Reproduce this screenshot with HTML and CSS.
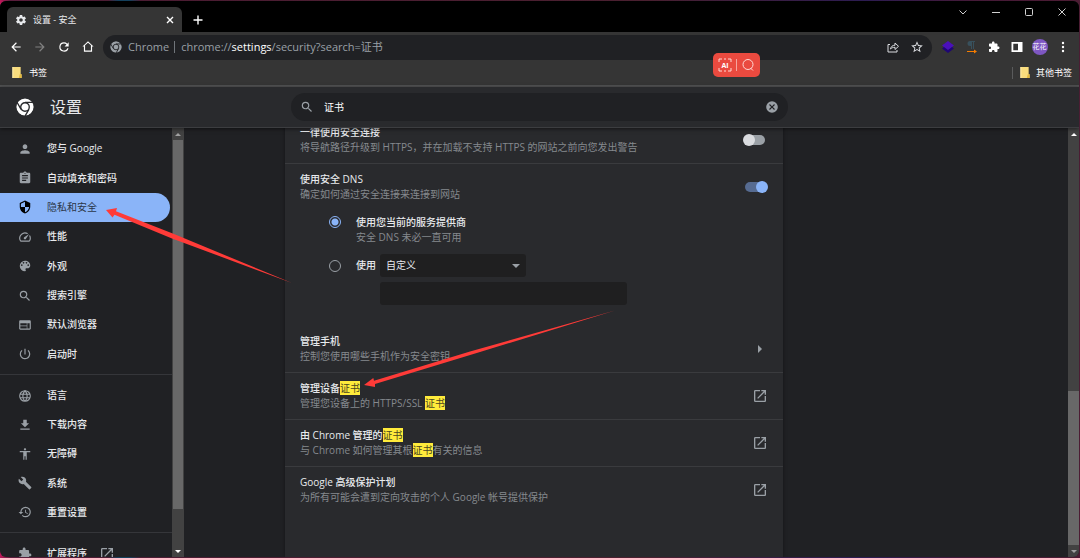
FILE: index.html
```html
<!DOCTYPE html>
<html lang="zh-CN">
<head>
<meta charset="utf-8">
<meta name="viewport" content="width=device-width, initial-scale=1">
<title>设置 - 安全</title>
<link rel="stylesheet" href="styles.css">
</head>
<body>
<svg class="sprite" aria-hidden="true">
  <symbol id="chrome" viewBox="0 0 24 24">
    <mask id="cut">
      <circle cx="12" cy="12" r="12" fill="#fff"/>
      <circle cx="12" cy="12" r="5.7" fill="#fff" stroke="#000" stroke-width="1.8"/>
      <path d="M12 5.900H23M6.800 15.200 1.300 5.700M17.200 15.200 11.700 24.700" stroke="#000" stroke-width="1.800" fill="none"/>
    </mask>
    <circle cx="12" cy="12" r="11.500" mask="url(#cut)"/>
  </symbol>
  <symbol id="search" viewBox="0 0 24 24"><path d="M15.500 14h-.79l-.28-.27A6.470 6.470 0 0 0 16 9.500 6.500 6.500 0 1 0 9.500 16c1.610 0 3.090-.59 4.230-1.570l.27.28v.79l5 4.990L20.490 19l-4.990-5zm-6 0C7.010 14 5 11.990 5 9.500S7.010 5 9.500 5 14 7.010 14 9.500 11.990 14 9.500 14z"/></symbol>
  <symbol id="gear" viewBox="0 0 24 24"><path d="M19.430 12.980c.04-.32.07-.64.07-.98s-.03-.66-.07-.98l2.110-1.650c.19-.15.24-.42.12-.64l-2-3.460c-.12-.22-.39-.3-.61-.22l-2.490 1c-.52-.4-1.080-.73-1.690-.98l-.38-2.650A.488.488 0 0 0 14 2h-4c-.25 0-.46.18-.49.42l-.38 2.650c-.61.25-1.170.59-1.690.98l-2.490-1c-.23-.09-.49 0-.61.22l-2 3.460c-.13.22-.07.49.12.64l2.110 1.650c-.04.32-.07.65-.07.98s.03.66.07.98l-2.110 1.650c-.19.15-.24.42-.12.64l2 3.460c.12.22.39.3.61.22l2.490-1c.52.4 1.080.73 1.690.98l.38 2.650c.03.24.24.42.49.42h4c.25 0 .46-.18.49-.42l.38-2.650c.61-.25 1.170-.59 1.690-.98l2.490 1c.23.09.49 0 .61-.22l2-3.460c.12-.22.07-.49-.12-.64l-2.110-1.650zM12 15.500c-1.930 0-3.500-1.570-3.500-3.500s1.570-3.500 3.500-3.500 3.500 1.570 3.500 3.500-1.570 3.500-3.500 3.500z"/></symbol>
  <symbol id="puzzle" viewBox="0 0 24 24"><path d="M20.500 11H19V7c0-1.100-.9-2-2-2h-4V3.500C13 2.120 11.880 1 10.500 1S8 2.120 8 3.500V5H4c-1.100 0-1.990.9-1.990 2v3.800H3.500c1.490 0 2.700 1.210 2.700 2.700s-1.210 2.700-2.700 2.700H2V20c0 1.100.9 2 2 2h3.800v-1.500c0-1.490 1.210-2.700 2.700-2.700s2.700 1.210 2.700 2.700V22H17c1.100 0 2-.9 2-2v-4h1.500c1.380 0 2.500-1.120 2.500-2.500S21.880 11 20.500 11z"/></symbol>
  <symbol id="open" viewBox="0 0 24 24"><path d="M19 19H5V5h7V3H5a2 2 0 0 0-2 2v14a2 2 0 0 0 2 2h14c1.100 0 2-.9 2-2v-7h-2v7zM14 3v2h3.590l-9.830 9.830 1.410 1.410L19 6.410V10h2V3h-7z"/></symbol>
  <symbol id="folder" viewBox="0 0 10 12"><path d="M0 0h9v8h1v4H0z" fill="#f9dd7e"/><path d="M8 8h2v4H7z" fill="#e3b93f"/><path d="M0 0h1v12H0z" fill="#ffedb0"/></symbol>
</svg>

<div class="window">
  <header class="tabstrip">
    <div class="tab">
      <svg class="ico12"><use href="#gear"/></svg>
      <span class="tab-title">设置 - 安全</span>
      <button class="plain" aria-label="关闭标签页"><svg class="ico8 line" viewBox="0 0 8 8"><path d="M1 1l6 6M7 1L1 7"/></svg></button>
    </div>
    <button class="plain newtab" aria-label="打开新的标签页"><svg class="ico10 line" viewBox="0 0 10 10"><path d="M5 .5v9M.5 5h9"/></svg></button>
    <div class="controls">
      <button class="plain" aria-label="搜索标签页"><svg class="ico8 thin" viewBox="0 0 8 8"><path d="M.5 2.500 4 6l3.500-3.500"/></svg></button>
      <button class="plain" aria-label="最小化"><svg class="ico8 thin" viewBox="0 0 8 8"><path d="M0 4.500h8"/></svg></button>
      <button class="plain" aria-label="最大化"><svg class="ico8 thin" viewBox="0 0 8 8"><rect x=".5" y=".5" width="7" height="7" rx="1"/></svg></button>
      <button class="plain" aria-label="关闭"><svg class="ico8 thin" viewBox="0 0 8 8"><path d="M.5.5l7 7M7.500.5l-7 7"/></svg></button>
    </div>
  </header>

  <div class="toolbar">
    <div class="nav">
      <button class="plain" aria-label="后退"><svg class="ico14" viewBox="0 0 24 24"><path d="M20 11H7.830l5.590-5.590L12 4l-8 8 8 8 1.410-1.410L7.830 13H20v-2z"/></svg></button>
      <button class="plain dim" aria-label="前进"><svg class="ico14" viewBox="0 0 24 24"><path d="M12 4l-1.410 1.410L16.170 11H4v2h12.170l-5.580 5.590L12 20l8-8z"/></svg></button>
      <button class="plain" aria-label="重新加载"><svg class="ico14" viewBox="0 0 24 24"><path d="M17.650 6.350A7.958 7.958 0 0 0 12 4a8 8 0 1 0 7.730 10h-2.080A6 6 0 1 1 12 6c1.660 0 3.140.69 4.220 1.780L13 11h7V4l-2.350 2.350z"/></svg></button>
      <button class="plain" aria-label="主页"><svg class="ico14" viewBox="0 0 24 24"><path d="M12 4.500l5 4.500v9H7V9l5-4.500M12 2L2.500 11H5v9h14v-9h2.500z" fill-rule="evenodd"/></svg></button>
    </div>
    <div class="omnibox">
      <svg class="ico12"><use href="#chrome"/></svg>
      <span class="origin">Chrome</span>
      <span class="url" role="textbox" aria-label="地址">chrome://<span class="host">settings</span>/security?search=证书</span>
      <button class="plain soft" aria-label="分享"><svg class="ico12 thin" viewBox="0 0 12 12"><path d="M3 3.500H1v7.500h9V9M3.500 8C4 5.500 5.500 4.300 8 4.200V2l3.500 3.300L8 8.500V6.300C6 6.300 4.600 6.800 3.500 8z"/></svg></button>
      <button class="plain" aria-label="收藏"><svg class="ico14" viewBox="0 0 24 24"><path d="M22 9.240l-7.190-.62L12 2 9.190 8.630 2 9.240l5.460 4.730L5.820 21 12 17.270 18.180 21l-1.630-7.030L22 9.240zM12 15.400l-3.760 2.270 1-4.280-3.320-2.880 4.380-.38L12 6.100l1.710 4.040 4.380.38-3.320 2.880 1 4.280L12 15.400z"/></svg></button>
    </div>
    <div class="extensions">
      <button class="plain" aria-label="图层扩展"><svg class="ico14" viewBox="0 0 14 14"><path d="M7 4l6 4.500-6 4.500-6-4.500z" fill="#1f0675"/><path d="M7 1l6 4.500L7 10 1 5.500z" fill="#4a0fbb"/></svg></button>
      <button class="plain" aria-label="段落扩展"><svg class="ico14" viewBox="0 0 14 14"><path d="M9 1H6a2.500 2.500 0 0 0 0 5h1v3h1V2h1v7h1V2h1V1z" fill="#38505c"/><path d="M3 11h7V9.500l3 2-3 2V12H3z" fill="#f57c00"/></svg></button>
      <button class="plain" aria-label="扩展程序"><svg class="ico12"><use href="#puzzle"/></svg></button>
      <button class="plain" aria-label="侧边栏"><svg class="ico12" viewBox="0 0 12 12"><path d="M.5 1h11v10H.5zM2.300 2.700v6.600h4.700V2.700z" fill-rule="evenodd"/></svg></button>
      <button class="plain" aria-label="用户 花花"><span class="avatar">花花</span></button>
      <button class="plain" aria-label="菜单"><svg class="ico12" viewBox="0 0 12 12"><circle cx="6" cy="2" r="1.200"/><circle cx="6" cy="6" r="1.200"/><circle cx="6" cy="10" r="1.200"/></svg></button>
    </div>
  </div>

  <div class="bookmarks">
    <a href="#bookmarks" class="bookmark"><svg class="folder"><use href="#folder"/></svg>书签</a>
    <a href="#others" class="bookmark others"><svg class="folder"><use href="#folder"/></svg>其他书签</a>
  </div>

  <div class="topbar">
    <div class="brand"><svg class="logo"><use href="#chrome"/></svg><h1>设置</h1></div>
    <div class="searchbox">
      <svg class="ico14"><use href="#search"/></svg>
      <input type="text" value="证书" aria-label="在设置中搜索">
      <button class="plain clear" aria-label="清除搜索"><svg class="ico14" viewBox="0 0 24 24"><path d="M12 2a10 10 0 1 0 0 20 10 10 0 0 0 0-20zm5 13.590L15.590 17 12 13.410 8.410 17 7 15.590 10.590 12 7 8.410 8.410 7 12 10.590 15.590 7 17 8.410 13.410 12 17 15.590z"/></svg></button>
    </div>
  </div>

  <div class="content">
    <aside class="sidebar">
      <nav class="menu">
        <div class="group eight">
          <a href="#people"><svg class="ico14" viewBox="0 0 24 24"><path d="M12 12c2.210 0 4-1.790 4-4s-1.790-4-4-4-4 1.790-4 4 1.790 4 4 4zm0 2c-2.670 0-8 1.340-8 4v2h16v-2c0-2.660-5.330-4-8-4z"/></svg>您与 Google</a>
          <a href="#autofill"><svg class="ico14" viewBox="0 0 24 24"><path d="M19 3h-4.180C14.400 1.840 13.300 1 12 1s-2.400.84-2.820 2H5c-1.100 0-2 .9-2 2v14c0 1.100.9 2 2 2h14c1.100 0 2-.9 2-2V5c0-1.100-.9-2-2-2zm-7 0c.55 0 1 .45 1 1s-.45 1-1 1-1-.45-1-1 .45-1 1-1zm2 14H7v-2h7v2zm3-4H7v-2h10v2zm0-4H7V7h10v2z"/></svg>自动填充和密码</a>
          <a href="#privacy" class="selected" aria-current="page"><svg class="ico14" viewBox="0 0 24 24"><path d="M12 1L3 5v6c0 5.550 3.840 10.740 9 12 5.160-1.260 9-6.450 9-12V5l-9-4zm0 10.990h7c-.53 4.120-3.280 7.790-7 8.940V12H5V6.300l7-3.110v8.800z"/></svg>隐私和安全</a>
          <a href="#performance"><svg class="ico14" viewBox="0 0 24 24"><path d="M20.380 8.570l-1.230 1.850a8 8 0 0 1-.22 7.580H5.070A8 8 0 0 1 15.580 6.850l1.850-1.230A10 10 0 0 0 3.350 19a2 2 0 0 0 1.720 1h13.850a2 2 0 0 0 1.740-1 10 10 0 0 0-.27-10.440zm-9.790 6.840a2 2 0 0 0 2.830 0l5.660-8.490-8.490 5.660a2 2 0 0 0 0 2.830z"/></svg>性能</a>
          <a href="#appearance"><svg class="ico14" viewBox="0 0 24 24"><path d="M12 3a9 9 0 1 0 0 18c.83 0 1.500-.67 1.500-1.500 0-.39-.15-.74-.39-1.010-.23-.26-.38-.61-.38-.99 0-.83.67-1.500 1.500-1.500H16c2.760 0 5-2.240 5-5 0-4.420-4.030-8-9-8zm-5.500 9c-.83 0-1.500-.67-1.500-1.500S5.670 9 6.500 9 8 9.670 8 10.500 7.330 12 6.500 12zm3-4C8.670 8 8 7.330 8 6.500S8.670 5 9.500 5s1.500.67 1.500 1.500S10.330 8 9.500 8zm5 0c-.83 0-1.500-.67-1.500-1.500S13.670 5 14.500 5s1.500.67 1.500 1.500S15.330 8 14.500 8zm3 4c-.83 0-1.500-.67-1.500-1.500S16.670 9 17.500 9s1.500.67 1.500 1.500-.67 1.500-1.500 1.500z"/></svg>外观</a>
          <a href="#engine"><svg class="ico14"><use href="#search"/></svg>搜索引擎</a>
          <a href="#default"><svg class="ico14" viewBox="0 0 24 24"><path d="M20 4H4c-1.100 0-1.990.9-1.990 2L2 18c0 1.100.9 2 2 2h16c1.100 0 2-.9 2-2V6c0-1.100-.9-2-2-2zm-5 14H4v-4h11v4zm0-5H4V9h11v4zm5 5h-4V9h4v9z"/></svg>默认浏览器</a>
          <a href="#startup"><svg class="ico14" viewBox="0 0 24 24"><path d="M13 3h-2v10h2V3zm4.830 2.170l-1.420 1.420A6.920 6.920 0 0 1 19 12a7 7 0 1 1-11.420-5.420L6.170 5.170A8.932 8.932 0 0 0 3 12a9 9 0 1 0 14.830-6.830z"/></svg>启动时</a>
        </div>
        <hr>
        <div class="group five">
          <a href="#languages"><svg class="ico14" viewBox="0 0 24 24"><path d="M12 2.900a9.100 9.100 0 1 0 0 18.200 9.100 9.100 0 0 0 0-18.200zM3 9h18M3 15h18M12 3c-5 5-5 13 0 18M12 3c5 5 5 13 0 18" fill="none" stroke="currentColor" stroke-width="1.900"/></svg>语言</a>
          <a href="#downloads"><svg class="ico14" viewBox="0 0 24 24"><path d="M19 9h-4V3H9v6H5l7 7 7-7zM4 18v2h16v-2H4z"/></svg>下载内容</a>
          <a href="#a11y"><svg class="ico14" viewBox="0 0 24 24"><path d="M12 2c1.100 0 2 .9 2 2s-.9 2-2 2-2-.9-2-2 .9-2 2-2zm9 7h-6v13h-2v-6h-2v6H9V9H3V7h18v2z"/></svg>无障碍</a>
          <a href="#system"><svg class="ico14" viewBox="0 0 24 24"><path d="M22.700 19l-9.100-9.100c.9-2.300.4-5-1.500-6.900-2-2-5-2.400-7.400-1.300L9 6 6 9 1.600 4.700C.4 7.100.9 10.100 2.900 12.100c1.900 1.900 4.600 2.400 6.900 1.500l9.100 9.100c.4.4 1 .4 1.400 0l2.300-2.300c.5-.4.5-1.100.1-1.400z"/></svg>系统</a>
          <a href="#reset"><svg class="ico14" viewBox="0 0 24 24"><path d="M13 3a9 9 0 0 0-9 9H1l3.890 3.890.07.14L9 12H6c0-3.870 3.130-7 7-7s7 3.130 7 7-3.130 7-7 7c-1.930 0-3.680-.79-4.940-2.060l-1.420 1.420A8.954 8.954 0 0 0 13 21a9 9 0 0 0 0-18zm-1 5v5l4.280 2.540.72-1.210-3.500-2.080V8H12z"/></svg>重置设置</a>
        </div>
        <hr>
        <div class="group">
          <a href="#extensions"><svg class="ico14"><use href="#puzzle"/></svg>扩展程序<svg class="ico16 external"><use href="#open"/></svg></a>
        </div>
      </nav>
      <div class="scrollbar" aria-hidden="true"><i class="up faded"></i><i class="thumb side"></i><i class="down"></i></div>
    </aside>

    <main class="card">
      <section class="row">
        <label class="text" for="https"><b>一律使用安全连接</b><small>将导航路径升级到 HTTPS，并在加载不支持 HTTPS 的网站之前向您发出警告</small></label>
        <input class="toggle" type="checkbox" id="https">
      </section>
      <section class="row open">
        <label class="text" for="dns"><b>使用安全 DNS</b><small>确定如何通过安全连接来连接到网站</small></label>
        <input class="toggle" type="checkbox" id="dns" checked>
      </section>
      <section class="options">
        <div class="option">
          <input class="radio" type="radio" name="provider" id="current" checked>
          <label class="text" for="current"><b>使用您当前的服务提供商</b><small>安全 DNS 未必一直可用</small></label>
        </div>
        <div class="option custom">
          <input class="radio" type="radio" name="provider" id="other">
          <label class="text" for="other"><b>使用</b></label>
          <div class="fields">
            <span class="select"><select aria-label="DNS 提供商"><option>自定义</option></select></span>
            <input class="field" type="text" aria-label="自定义 DNS 提供商">
          </div>
        </div>
      </section>
      <section class="row">
        <div class="text"><b>管理手机</b><small>控制您使用哪些手机作为安全密钥</small></div>
        <button class="plain go" aria-label="管理手机"><svg class="ico14" viewBox="0 0 14 14"><path d="M5 3l4 4-4 4z"/></svg></button>
      </section>
      <section class="row">
        <div class="text"><b>管理设备<mark>证书</mark></b><small>管理您设备上的 HTTPS/SSL <mark>证书</mark></small></div>
        <button class="plain go" aria-label="管理设备证书"><svg class="ico16"><use href="#open"/></svg></button>
      </section>
      <section class="row">
        <div class="text"><b>由 Chrome 管理的<mark>证书</mark></b><small>与 Chrome 如何管理其根<mark>证书</mark>有关的信息</small></div>
        <button class="plain go" aria-label="由 Chrome 管理的证书"><svg class="ico16"><use href="#open"/></svg></button>
      </section>
      <section class="row open">
        <div class="text"><b>Google 高级保护计划</b><small>为所有可能会遭到定向攻击的个人 Google 帐号提供保护</small></div>
        <button class="plain go" aria-label="Google 高级保护计划"><svg class="ico16"><use href="#open"/></svg></button>
      </section>
    </main>

    <div class="scrollbar page" aria-hidden="true"><i class="up"></i><i class="thumb main"></i><i class="down faded"></i></div>
  </div>
</div>

<button class="capture" aria-label="AI 搜索">
  <svg class="ai" viewBox="0 0 14 14"><path d="M1 4V1h3M6 1h2M10 1h3v3M13 10v3h-3M8 13H6M4 13H1v-3"/><text x="7" y="10">AI</text></svg>
  <span class="bar"></span>
  <svg viewBox="0 0 14 14"><circle cx="7" cy="6.500" r="5"/><path d="M9.500 10l2.500 2.500"/></svg>
</button>

<svg class="arrows" viewBox="0 0 1080 558" aria-hidden="true">
  <path d="M106 210L117 208L116 211.200L174 234L292 283L172 238.500L114.500 214.800L112.500 217.500z"/>
  <path d="M364 385L373.300 378L374 380.800L470 351.500L615 310.500L480 352L375 384L375 387z"/>
</svg>
</body>
</html>
```
FILE: styles.css
```css
* { box-sizing: border-box; }

body {
  margin: 0;
  padding: 1px 1px 1px 0;
  height: 100vh;
  overflow: hidden;
  position: relative;
  background: linear-gradient(90deg, #c2185b 0, #5a1d3c 10px, #4c1c33 10%, #14405c 11%, #14405c 12%, #4c1c33 13%, #4a2030 60%, #2c1c52 80%, #451a38 90%, #4c1c33 100%);
  color: #e8eaed;
  font-family: "Open Sans", "Noto Sans CJK SC", sans-serif;
  font-size: 10px;
  line-height: 15px;
}

.sprite { position: absolute; width: 0; height: 0; }
svg { fill: currentColor; flex: none; display: block; }
.ico8 { width: 8px; height: 8px; }
.ico10 { width: 10px; height: 10px; }
.ico12 { width: 12px; height: 12px; }
.ico14 { width: 14px; height: 14px; }
.ico16 { width: 16px; height: 16px; }
.line { fill: none; stroke: currentColor; stroke-width: 1.4; }
.thin { fill: none; stroke: currentColor; stroke-width: 1; }

.plain {
  display: flex;
  align-items: center;
  justify-content: center;
  padding: 0;
  border: 0;
  background: none;
  color: #fff;
  font: inherit;
}
.dim { color: #808080; }
.omnibox .soft { color: #b0b3b6; }

.window {
  display: flex;
  flex-direction: column;
  height: 100%;
  overflow: hidden;
  border-radius: 6px;
  background: #202124;
}

/* Tab strip */
.tabstrip {
  display: flex;
  flex: none;
  height: 31px;
  padding-left: 7px;
  background: #000;
}
.tab {
  display: flex;
  align-items: center;
  gap: 6px;
  width: 175px;
  margin-top: 6px;
  padding: 0 8px;
  border-radius: 6px 6px 0 0;
  background: #353535;
  font-size: 9px;
}
.tab-title { flex: 1; }
.newtab { width: 32px; margin-top: 6px; }
.controls { display: flex; height: 22px; margin: 0 1px 0 auto; }
.controls .plain { width: 33px; color: #d0d0d0; }

/* Toolbar */
.toolbar {
  display: flex;
  flex: none;
  align-items: center;
  height: 30px;
  padding: 0 5px 0 4px;
  background: #353535;
}
.nav, .extensions { display: flex; }
.nav .plain { width: 24px; height: 24px; }
.extensions .plain { width: 23px; height: 24px; }
.extensions { margin-left: 4px; }
.omnibox {
  display: flex;
  flex: 1;
  align-items: center;
  gap: 6px;
  height: 25px;
  margin-left: 3px;
  padding: 0 6px 0 7px;
  border-radius: 13px;
  background: #202124;
  color: #9aa0a6;
  font-size: 11px;
  line-height: 12px;
}
.origin { padding-right: 5px; border-right: 1px solid #70757a; }
.url { flex: 1; white-space: nowrap; }
.host { color: #fff; }
.omnibox .plain { width: 18px; color: #dadce0; }
.avatar {
  width: 16px;
  height: 16px;
  border-radius: 50%;
  background: #7e57c2;
  font-size: 7px;
  line-height: 16px;
  text-align: center;
}

/* Bookmarks bar */
.bookmarks {
  display: flex;
  flex: none;
  align-items: center;
  justify-content: space-between;
  height: 25px;
  padding: 0 7px 2px 12px;
  border-bottom: 2px solid #505152;
  background: #353535;
}
.bookmark {
  display: flex;
  align-items: center;
  gap: 7px;
  color: #fff;
  font-size: 9px;
  line-height: 12px;
  text-decoration: none;
}
.others { gap: 6px; padding-left: 7px; border-left: 1px solid #5a5b5c; }
.folder { width: 10px; height: 11px; }

/* Settings header */
.topbar {
  display: grid;
  flex: none;
  grid-template-columns: 1fr minmax(0, 497px) 1fr;
  align-items: center;
  height: 41px;
  border-bottom: 1px solid #3c3d40;
  background: #292a2d;
  box-shadow: 0 1px 4px #0008;
  z-index: 1;
}
.brand { display: flex; align-items: center; gap: 16px; padding-left: 16px; }
.logo { width: 18px; height: 18px; color: #fff; }
h1 { margin: 0; font-size: 16px; font-weight: 400; line-height: 24px; }
.searchbox {
  display: flex;
  align-items: center;
  gap: 10px;
  height: 28px;
  padding: 0 9px;
  border-radius: 14px;
  background: #202124;
  color: #9aa0a6;
}
.searchbox input {
  flex: 1;
  min-width: 0;
  padding: 0;
  border: 0;
  outline: 0;
  background: none;
  color: #fff;
  font: inherit;
}
.clear { color: #9aa0a6; }

/* Content */
.content {
  display: grid;
  flex: 1;
  grid-template-columns: 1fr minmax(0, 498px) 1fr 11px;
  min-height: 0;
}
.sidebar { display: flex; width: 184px; min-height: 0; }
.menu { flex: 1; padding-top: 6px; overflow: hidden; }
.group { display: grid; grid-auto-rows: 1fr; min-height: 29px; }
.eight { min-height: 235px; }
.five { min-height: 146px; }
.group a {
  display: flex;
  align-items: center;
  gap: 15px;
  margin-right: 2px;
  padding-left: 18px;
  border-radius: 0 15px 15px 0;
  color: #e8eaed;
  font-weight: 500;
  text-decoration: none;
}
.group svg { color: #9aa0a6; }
.group .selected { background: #8ab4f8; color: #2b3648; font-weight: 400; }
.group .selected svg { color: #000; }
.group .external { margin-left: -3px; }
hr { height: 1px; margin: 5px 0 6px; border: 0; background: #35363a; }

.scrollbar {
  display: flex;
  flex-direction: column;
  width: 12px;
  padding: 0 1px;
  background: #424242;
}
.page { grid-column: 4; width: auto; padding: 0; }
.up, .down { display: flex; flex: none; align-items: center; justify-content: center; height: 12px; }
.up::before, .down::before { content: ""; border: 3px solid transparent; }
.up::before { border-top: 0; border-bottom-color: #fff; }
.down::before { border-bottom: 0; border-top-color: #fff; }
.faded { opacity: 0.5; }
.thumb { background: #686868; }
.side { height: 86%; }
.main { height: 36%; margin-top: auto; }
.side + .down { margin-top: auto; }

/* Settings card, scrolled slightly under the header */
.card { margin-top: -11px; background: #292a2d; box-shadow: 0 0 4px #0006; }
.row {
  display: flex;
  align-items: center;
  justify-content: space-between;
  padding: 8px 15px;
  border-bottom: 1px solid #3a3b3e;
}
.open { border-bottom: 0; }
.text b, .text small { display: block; font-size: 10px; }
.text b { font-weight: 500; }
.text small { color: #85898e; }
mark { padding: 0; background: #ffeb3b; color: #4a4720; font-weight: 400; }
.go { width: 16px; color: #9aa0a6; }

.toggle {
  position: relative;
  appearance: none;
  width: 20px;
  height: 10px;
  margin: 0 3px 1px 0;
  border-radius: 5px;
  background: #9aa0a6;
}
.toggle::before {
  content: "";
  position: absolute;
  top: -1px;
  left: -2px;
  width: 12px;
  height: 12px;
  border-radius: 50%;
  background: #dadce0;
}
.toggle:checked { background: #566b91; }
.toggle:checked::before { left: 11px; background: #8ab4f8; }

.options { padding: 5px 15px 21px 44px; }
.option { display: flex; gap: 15px; }
.radio {
  flex: none;
  appearance: none;
  width: 12px;
  height: 12px;
  margin: 1px 0;
  border: 1px solid #9aa0a6;
  border-radius: 50%;
}
.radio:checked { border-color: #8ab4f8; background: radial-gradient(circle, #8ab4f8 3px, transparent 4px); }
.custom { margin-top: 9px; }
.custom .radio { margin-top: 6px; }
.custom .text { padding-top: 4px; margin-right: -11px; }
.fields { display: grid; flex: 0 1 247px; gap: 5px; }
.select { position: relative; width: 146px; }
.select::after {
  content: "";
  position: absolute;
  top: 10px;
  right: 6px;
  border: 4px solid transparent;
  border-top-color: #9aa0a6;
  border-bottom: 0;
}
.select select, .field {
  display: block;
  width: 100%;
  height: 23px;
  padding: 0 6px;
  border: 0;
  border-radius: 3px;
  appearance: none;
  background: #1f1f20;
  color: #e8eaed;
  font: inherit;
}

/* Floating capture button */
.capture {
  position: absolute;
  top: 53px;
  left: 66%;
  display: flex;
  align-items: center;
  gap: 4px;
  height: 24px;
  padding: 0 5px;
  border: 0;
  border-radius: 5px;
  background: #ea4a3f;
  color: #fff;
}
.capture svg { width: 14px; height: 14px; fill: none; stroke: #ffd9d5; stroke-width: 1; }
.capture text { fill: #fff; stroke: none; font: 700 7px "Open Sans", sans-serif; text-anchor: middle; }
.bar { width: 1px; height: 12px; background: #f5a49e; }

.arrows { position: absolute; inset: 0; width: 100%; height: 100%; fill: #ff3b38; pointer-events: none; }
```
